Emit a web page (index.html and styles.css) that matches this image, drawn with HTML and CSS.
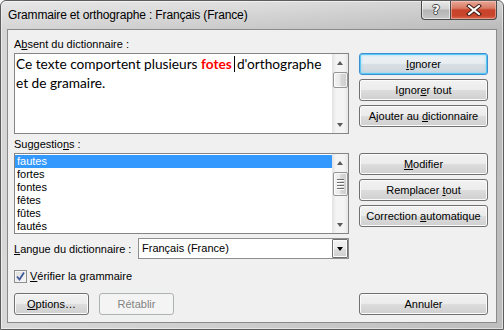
FILE: index.html
```html
<!DOCTYPE html>
<html lang="fr">
<head>
<meta charset="utf-8">
<title>Grammaire et orthographe</title>
<link rel="stylesheet" href="styles.css">
</head>
<body>
<div class="window">
  <div class="titlebar">
    <span class="title">Grammaire et orthographe : Français (France)</span>
    <div class="caption">
      <div class="cap help"><span>?</span></div>
      <div class="cap close">
        <svg width="16" height="12" viewBox="0 0 16 12"><path d="M3 2 L13 10 M13 2 L3 10" stroke="#3a1a14" stroke-width="4" stroke-linecap="square"/><path d="M3 2 L13 10 M13 2 L3 10" stroke="#ffffff" stroke-width="2" stroke-linecap="square"/></svg>
      </div>
    </div>
  </div>
  <div class="client">
    <div class="group">
      <div class="label">A<u>b</u>sent du dictionnaire :</div>
      <div class="row">
        <div class="box">
          <div class="text">
            <div class="line"><span>Ce texte comportent plusieurs</span> <span class="err">fotes</span><span class="caret"></span><span>d'orthographe</span></div>
            <div class="line">et de gramaire.</div>
          </div>
          <div class="vscroll">
            <div class="arrow up"></div>
            <div class="thumb small"></div>
            <div class="track"></div>
            <div class="arrow down"></div>
          </div>
        </div>
        <div class="btncol">
          <div class="btn default"><span><u>I</u>gnorer</span></div>
          <div class="btn"><span>Ignor<u>e</u>r tout</span></div>
          <div class="btn"><span>Ajouter au <u>d</u>ictionnaire</span></div>
        </div>
      </div>
    </div>
    <div class="group g2">
      <div class="label">Suggestio<u>n</u>s :</div>
      <div class="row">
        <div class="box">
          <div class="list">
            <div class="item sel">fautes</div>
            <div class="item">fortes</div>
            <div class="item">fontes</div>
            <div class="item">fêtes</div>
            <div class="item">fûtes</div>
            <div class="item">fautés</div>
          </div>
          <div class="vscroll">
            <div class="arrow up"></div>
            <div class="thumb big"><i></i><i></i><i></i><i></i></div>
            <div class="track"></div>
            <div class="arrow down"></div>
          </div>
        </div>
        <div class="btncol">
          <div class="btn"><span><u>M</u>odifier</span></div>
          <div class="btn"><span>Remplacer <u>t</u>out</span></div>
          <div class="btn"><span>Correction <u>a</u>utomatique</span></div>
        </div>
      </div>
    </div>
    <div class="langrow">
      <div class="langlabel"><u>L</u>angue du dictionnaire :</div>
      <div class="combo">
        <div class="combotext">Français (France)</div>
        <div class="combobtn"><div class="tri"></div></div>
      </div>
    </div>
    <div class="checkrow">
      <div class="checkbox">
        <svg width="11" height="11" viewBox="0 0 11 11"><path d="M2 5.5 L4.5 8.5 L9 1.5" fill="none" stroke="#3e579a" stroke-width="1.8"/></svg>
      </div>
      <div class="checklabel"><u>V</u>érifier la grammaire</div>
    </div>
    <div class="bottomrow">
      <div class="btn small"><span><u>O</u>ptions…</span></div>
      <div class="btn small disabled"><span>Rétablir</span></div>
      <div class="spacer"></div>
      <div class="btn wide"><span>Annuler</span></div>
    </div>
  </div>
</div>
</body>
</html>
```

FILE: styles.css
```css
* { box-sizing: border-box; }
html, body { margin: 0; padding: 0; }
body {
  width: 504px;
  height: 330px;
  overflow: hidden;
  font-family: "Liberation Sans", Arial, sans-serif;
  font-size: 11px;
  color: #000;
  background: #fff;
}
u { text-decoration: underline; text-underline-offset: 1px; }

.window {
  width: 504px;
  height: 330px;
  display: flex;
  flex-direction: column;
  padding: 0 6px 6px 6px;
  border: 1px solid #5c5c5c;
  border-radius: 6px 6px 0 0;
  background:
    linear-gradient(to right, rgba(255,255,255,0.28), rgba(255,255,255,0.08) 45%, rgba(0,0,0,0.06) 100%),
    linear-gradient(#dedede, #c6c6c6 28px, #c9c9c9);
  box-shadow: inset 0 0 0 1px rgba(255,255,255,0.5);
}

.titlebar {
  height: 28px;
  display: flex;
  align-items: flex-start;
}
.title {
  margin-left: 1px;
  margin-top: 7px;
  font-size: 12px;
  letter-spacing: -0.15px;
  line-height: 15px;
  color: #000;
}
.caption {
  margin-left: auto;
  display: flex;
  height: 19px;
}
.cap {
  height: 19px;
  border: 1px solid #4a4a4a;
  border-top: none;
  display: flex;
  align-items: center;
  justify-content: center;
}
.help {
  width: 29px;
  border-right: none;
  border-radius: 0 0 0 4px;
  background: linear-gradient(#eaeaea 0%, #d2d2d2 45%, #b4b4b4 50%, #c6c6c6 100%);
  box-shadow: inset 0 0 0 1px rgba(255,255,255,0.55);
}
.help span {
  font-family: "DejaVu Sans", sans-serif;
  font-weight: bold;
  font-size: 13px;
  color: #fff;
  text-shadow: -1px 0 #444, 1px 0 #444, 0 -1px #444, 0 1px #444;
  line-height: 14px;
}
.close {
  width: 47px;
  border-radius: 0 0 4px 0;
  background: linear-gradient(#e9a898 0%, #d87a64 40%, #c8432a 50%, #c8452b 80%, #d9674f 100%);
  box-shadow: inset 0 0 0 1px rgba(255,220,210,0.45);
}

.client {
  flex: 1;
  background: #f0f0f0;
  border: 1px solid #8a8a8a;
  padding: 8px 8px 0 6px;
  display: flex;
  flex-direction: column;
}

.group { display: flex; flex-direction: column; gap: 2px; }
.g2 { margin-top: 4px; }
.label { height: 13px; line-height: 13px; }
.row { display: flex; gap: 10px; }

.box {
  width: 335px;
  height: 81px;
  border: 1px solid #858585;
  background: #fff;
  display: flex;
}
.text {
  flex: 1;
  padding: 0 2px 0 1px;
  font-family: Lato, "Open Sans", sans-serif;
  font-size: 13.7px;
  line-height: 19px;
  color: #000;
}
.line { height: 19px; white-space: nowrap; }
.err { color: #ff0000; font-weight: bold; }
.caret {
  display: inline-block;
  width: 1px;
  height: 16px;
  background: #000;
  margin: 0 2px 0 2px;
  vertical-align: -3px;
}

.list { flex: 1; padding-top: 1px; }
.item {
  height: 13px;
  line-height: 13px;
  padding-left: 2px;
  font-size: 11px;
}
.item.sel { background: #3399ff; color: #fff; }

.vscroll {
  width: 16px;
  display: flex;
  flex-direction: column;
  align-items: center;
  background: linear-gradient(to right, #e2e2e2, #f4f4f4 25%, #f4f4f4 75%, #e6e6e6);
}
.arrow {
  height: 17px;
  width: 16px;
  display: flex;
  align-items: center;
  justify-content: center;
  flex: none;
}
.arrow::before {
  content: "";
  width: 0;
  height: 0;
  border-left: 3.5px solid transparent;
  border-right: 3.5px solid transparent;
}
.arrow.up::before { border-bottom: 4px solid #5a5a5a; }
.arrow.down::before { border-top: 4px solid #5a5a5a; }
.track { flex: 1; }
.thumb {
  width: 15px;
  border: 1px solid #959595;
  border-radius: 2px;
  background: linear-gradient(to right, #f4f4f4, #e8e8e8 45%, #d6d6d6 55%, #cfcfcf);
  box-shadow: inset 0 0 0 1px rgba(255,255,255,0.7);
  margin-top: 1px;
  flex: none;
}
.thumb.small { height: 16px; }
.thumb.big {
  height: 24px;
  display: flex;
  flex-direction: column;
  align-items: center;
  justify-content: center;
  gap: 2px;
}
.thumb.big i {
  display: block;
  width: 7px;
  height: 1px;
  background: #6e6e6e;
  box-shadow: 0 1px 0 #fff;
}

.btncol { width: 129px; display: flex; flex-direction: column; gap: 4px; }
.btn {
  height: 22px;
  border: 1px solid #707070;
  border-radius: 3px;
  background: linear-gradient(#f2f2f2 0%, #ebebeb 50%, #dddddd 50%, #cfcfcf 100%);
  box-shadow: inset 0 0 0 1px #fbfbfb;
  display: flex;
  align-items: center;
  justify-content: center;
  line-height: 13px;
  color: #000;
  white-space: nowrap;
}
.btn.default {
  border-color: #3c8fd1;
  background: linear-gradient(#eef3f6 0%, #e6ecf0 50%, #d9e0e5 50%, #cdd6dc 100%);
  box-shadow: inset 0 0 0 1px #58c8f4, inset 0 0 2px 2px rgba(120,210,250,0.35);
}
.btn.disabled {
  border-color: #adb2b5;
  background: #f4f4f4;
  box-shadow: none;
  color: #838383;
}

.langrow {
  margin-top: 4px;
  height: 21px;
  display: flex;
  align-items: center;
}
.langlabel { width: 124px; }
.combo {
  width: 211px;
  height: 21px;
  border: 1px solid #8e8e8e;
  background: #fff;
  display: flex;
}
.combotext {
  flex: 1;
  padding-left: 3px;
  line-height: 19px;
}
.combobtn {
  width: 16px;
  height: 19px;
  border: 1px solid #707070;
  border-radius: 1px;
  background: linear-gradient(#f2f2f2 0%, #ebebeb 50%, #dddddd 50%, #cfcfcf 100%);
  box-shadow: inset 0 0 0 1px #fbfbfb;
  display: flex;
  align-items: center;
  justify-content: center;
}
.tri {
  width: 0;
  height: 0;
  border-left: 3.5px solid transparent;
  border-right: 3.5px solid transparent;
  border-top: 4px solid #000;
}

.checkrow {
  margin-top: 11px;
  height: 13px;
  display: flex;
  align-items: center;
  gap: 3px;
}
.checkbox {
  width: 13px;
  height: 13px;
  border: 1px solid #8e8f8f;
  background: linear-gradient(135deg, #dcdcdc, #f8f8f8);
  box-shadow: inset 0 0 0 1px #f4f4f4;
  display: flex;
  align-items: center;
  justify-content: center;
}
.checklabel { line-height: 13px; }

.bottomrow {
  margin-top: 10px;
  display: flex;
  gap: 10px;
}
.btn.small { width: 75px; }
.spacer { flex: 1; }
.btn.wide { width: 129px; }
```
